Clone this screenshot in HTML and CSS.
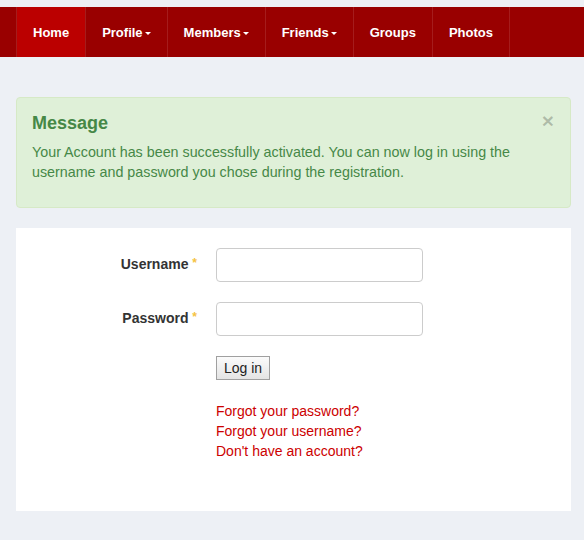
FILE: index.html
```html
<!DOCTYPE html>
<html lang="en">
<head>
  <meta charset="UTF-8" />
  <meta name="viewport" content="width=device-width, initial-scale=1.0"/>
  <title>Login</title>
  <link rel="stylesheet" href="styles.css">
</head>
<body>
  <div class="navbar">
    <ul class="nav">
      <li class="active"><a href="#">Home</a></li>
      <li><a href="#">Profile<span class="caret"></span></a></li>
      <li><a href="#">Members<span class="caret"></span></a></li>
      <li><a href="#">Friends<span class="caret"></span></a></li>
      <li><a href="#">Groups</a></li>
      <li><a href="#">Photos</a></li>
    </ul>
  </div>

  <div class="container">
    <div class="alert">
      <span class="close">&times;</span>
      <h4>Message</h4>
      <p>Your Account has been successfully activated. You can now log in using the username and password you chose during the registration.</p>
    </div>

    <div class="panel">
      <form class="login-form" onsubmit="return false;">
        <div class="form-row">
          <label for="username">Username <span class="star">*</span></label>
          <input type="text" id="username">
        </div>
        <div class="form-row">
          <label for="password">Password <span class="star">*</span></label>
          <input type="password" id="password">
        </div>
        <div class="form-row">
          <span class="spacer"></span>
          <button type="submit">Log in</button>
        </div>
      </form>

      <ul class="links">
        <li><a href="#">Forgot your password?</a></li>
        <li><a href="#">Forgot your username?</a></li>
        <li><a href="#">Don't have an account?</a></li>
      </ul>
    </div>
  </div>
</body>
</html>
```

FILE: styles.css
```css
body {
  margin: 0;
  font-family: "Liberation Sans", Arial, sans-serif;
  font-size: 14px;
  color: #333;
  background-color: #edf0f5;
}
.navbar {
  margin-top: 7px;
  height: 50px;
  background-color: #990000;
}
.nav {
  list-style: none;
  margin: 0;
  padding: 0 0 0 16px;
  display: flex;
  height: 100%;
}
.nav li {
  border-left: 1px solid #a51c1c;
}
.nav li:last-child {
  border-right: 1px solid #a51c1c;
}
.nav a {
  display: flex;
  align-items: center;
  height: 100%;
  padding: 0 16px;
  color: white;
  font-weight: bold;
  font-size: 13px;
  text-decoration: none;
}
.nav li.active a {
  background-color: #bb0000;
}
.caret {
  display: inline-block;
  margin-left: 2px;
  margin-top: 2px;
  border-top: 3px solid white;
  border-left: 3px solid transparent;
  border-right: 3px solid transparent;
}

.container {
  margin: 40px 13px 0 16px;
}
.alert {
  position: relative;
  padding: 15px;
  background-color: #dff0d8;
  border: 1px solid #d6e9c6;
  border-radius: 4px;
  color: #468847;
}
.alert h4 {
  margin: 0 0 9px;
  font-size: 18px;
  line-height: 20px;
}
.alert p {
  margin: 0 0 10px;
  font-size: 14.3px;
  line-height: 20px;
}
.close {
  position: absolute;
  top: 13px;
  right: 16px;
  font-size: 21px;
  font-weight: bold;
  line-height: 20px;
  color: rgba(0, 0, 0, 0.22);
}

.panel {
  margin-top: 20px;
  background: white;
  padding: 20px 0 50px;
}
.form-row {
  display: flex;
  align-items: center;
  margin-bottom: 20px;
}
.form-row label,
.form-row .spacer {
  width: 181px;
  padding-right: 19px;
  text-align: right;
  font-weight: bold;
}
.form-row label {
  margin-top: -3px;
}
.star {
  color: #f5c242;
  font-size: 12px;
  vertical-align: top;
}
.form-row input {
  width: 207px;
  height: 34px;
  box-sizing: border-box;
  border: 1px solid #ccc;
  border-radius: 4px;
  padding: 6px 10px;
  font-size: 14px;
}
.form-row button {
  height: 24px;
  padding: 0 7px;
  border: 1px solid #a0a0a0;
  background: linear-gradient(#fbfbfb, #e4e4e4);
  font-family: "Liberation Sans", Arial, sans-serif;
  font-size: 14px;
  color: #222;
}
.links {
  list-style: none;
  margin: 21px 0 0 200px;
  padding: 0;
}
.links li {
  line-height: 20px;
}
.links a {
  color: #cc0000;
  text-decoration: none;
}
```
